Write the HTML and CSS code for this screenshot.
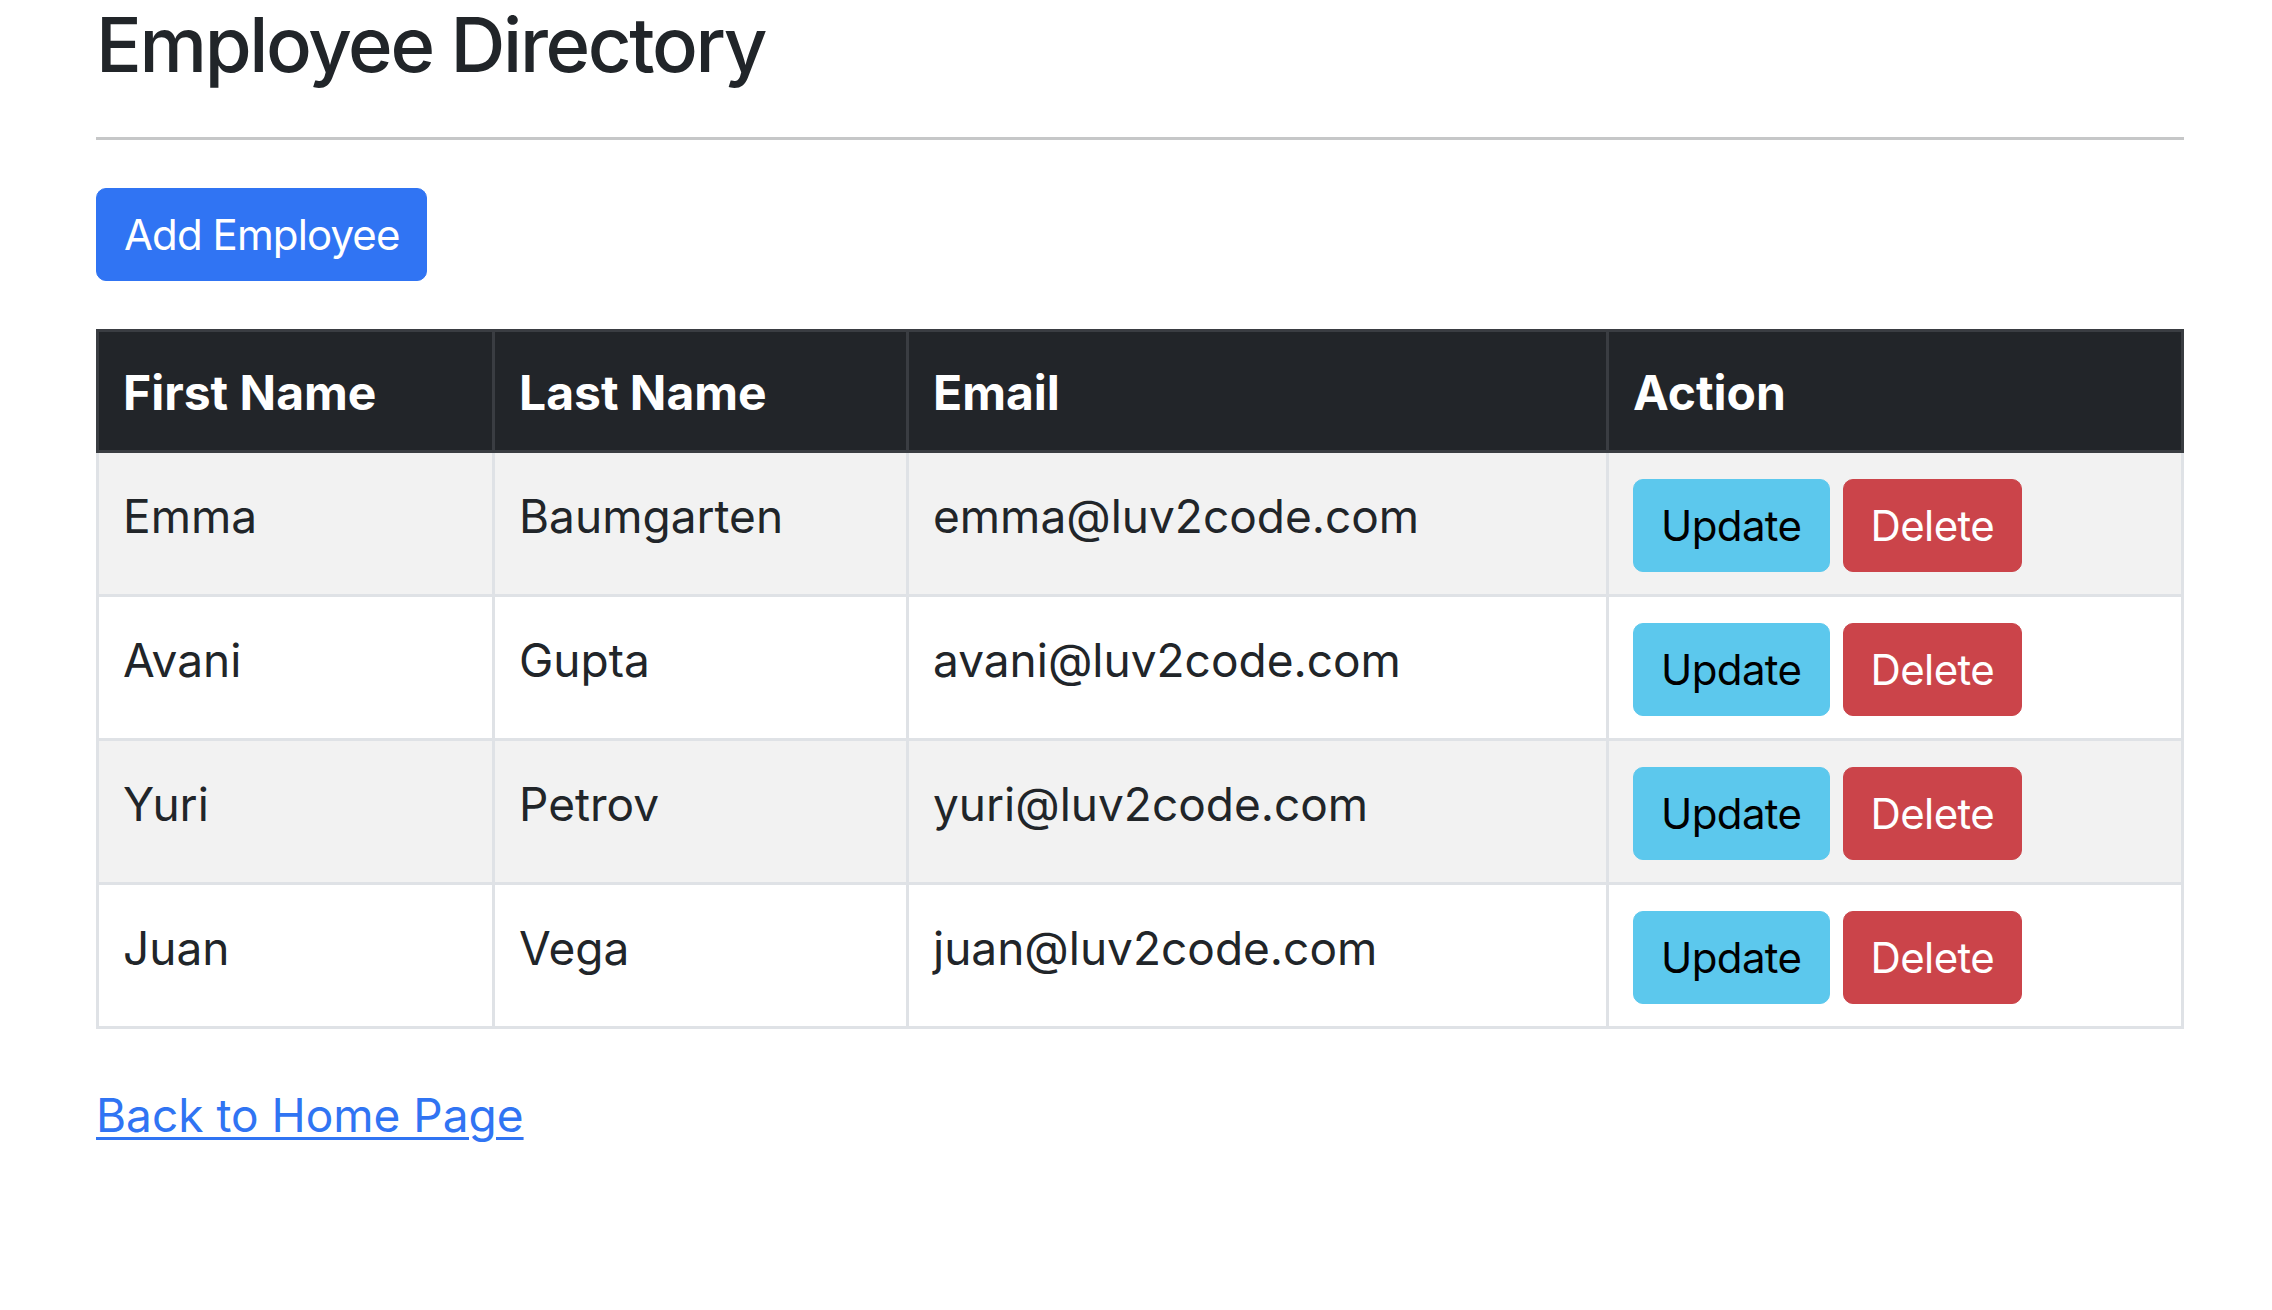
FILE: index.html
```html
<!DOCTYPE html>
<html lang="en">
<head>
<meta charset="utf-8">
<title>Employee Directory</title>
<link rel="stylesheet" href="styles.css">
</head>
<body>
<div class="container">
  <h3 class="title">Employee Directory</h3>
  <hr class="rule">
  <div class="toolbar">
    <a class="btn btn-primary" href="#">Add Employee</a>
  </div>
  <table class="table">
    <thead>
      <tr>
        <th class="col-first">First Name</th>
        <th class="col-last">Last Name</th>
        <th class="col-email">Email</th>
        <th class="col-action">Action</th>
      </tr>
    </thead>
    <tbody>
      <tr class="striped">
        <td>Emma</td>
        <td>Baumgarten</td>
        <td>emma@luv2code.com</td>
        <td><div class="actions"><a class="btn btn-info" href="#">Update</a><a class="btn btn-danger" href="#">Delete</a></div></td>
      </tr>
      <tr>
        <td>Avani</td>
        <td>Gupta</td>
        <td>avani@luv2code.com</td>
        <td><div class="actions"><a class="btn btn-info" href="#">Update</a><a class="btn btn-danger" href="#">Delete</a></div></td>
      </tr>
      <tr class="striped">
        <td>Yuri</td>
        <td>Petrov</td>
        <td>yuri@luv2code.com</td>
        <td><div class="actions"><a class="btn btn-info" href="#">Update</a><a class="btn btn-danger" href="#">Delete</a></div></td>
      </tr>
      <tr>
        <td>Juan</td>
        <td>Vega</td>
        <td>juan@luv2code.com</td>
        <td><div class="actions"><a class="btn btn-info" href="#">Update</a><a class="btn btn-danger" href="#">Delete</a></div></td>
      </tr>
    </tbody>
  </table>
  <div class="footer">
    <a class="back" href="#">Back to Home Page</a>
  </div>
</div>
</body>
</html>
```

FILE: styles.css
```css
html, body {
  margin: 0;
  padding: 0;
  background: #ffffff;
}

body {
  font-family: Inter, "Liberation Sans", Arial, sans-serif;
  color: #212529;
  font-size: 46px;
  line-height: 69px;
}

.container {
  width: 2088px;
  padding-left: 96px;
}

.title {
  margin: 0;
  font-size: 76px;
  font-weight: 500;
  line-height: 88px;
  letter-spacing: -2.35px;
  color: #212529;
}

.rule {
  margin: 49px 0 48px;
  border: 0;
  height: 3px;
  background: #c6c7c8;
}

.toolbar {
  display: flex;
}

.btn {
  display: inline-block;
  box-sizing: border-box;
  height: 93px;
  padding: 13px 27px;
  border: 1px solid transparent;
  border-radius: 10px;
  font-size: 42px;
  line-height: 65px;
  letter-spacing: -0.6px;
  text-decoration: none;
  white-space: nowrap;
}

.btn-primary {
  background: #3074f3;
  border-color: #3074f3;
  color: #ffffff;
  letter-spacing: -0.9px;
}

.btn-info {
  background: #5cc8ed;
  border-color: #5cc8ed;
  color: #000000;
}

.btn-danger {
  background: #cb444a;
  border-color: #cb444a;
  color: #ffffff;
}

.table {
  margin-top: 48px;
  width: 2088px;
  table-layout: fixed;
  border-collapse: separate;
  border-spacing: 0;
}

.table th,
.table td {
  box-sizing: border-box;
  padding: 26px 24px 22px;
  text-align: left;
  vertical-align: top;
}

.table th {
  background: #222529;
  color: #ffffff;
  font-size: 48px;
  font-weight: 700;
  line-height: 70px;
  border-top: 3px solid #3a3d42;
  border-right: 3px solid #3a3d42;
  border-bottom: 3px solid #3a3d42;
}

.table th:first-child {
  border-left: 3px solid #3a3d42;
}

.table td {
  line-height: 75px;
  border-right: 3px solid #dfe2e6;
  border-bottom: 3px solid #dfe2e6;
}

.table td:first-child {
  border-left: 3px solid #dfe2e6;
}

.table tr.striped td {
  background: #f2f2f2;
}

.col-first { width: 399px; }
.col-last { width: 414px; }
.col-email { width: 700px; }
.col-action { width: 575px; }

.actions {
  display: flex;
  gap: 13px;
}

.footer {
  margin-top: 52px;
}

.back {
  color: #3074f3;
  text-decoration: underline;
  text-decoration-thickness: 3px;
  text-underline-offset: 5px;
}
```
